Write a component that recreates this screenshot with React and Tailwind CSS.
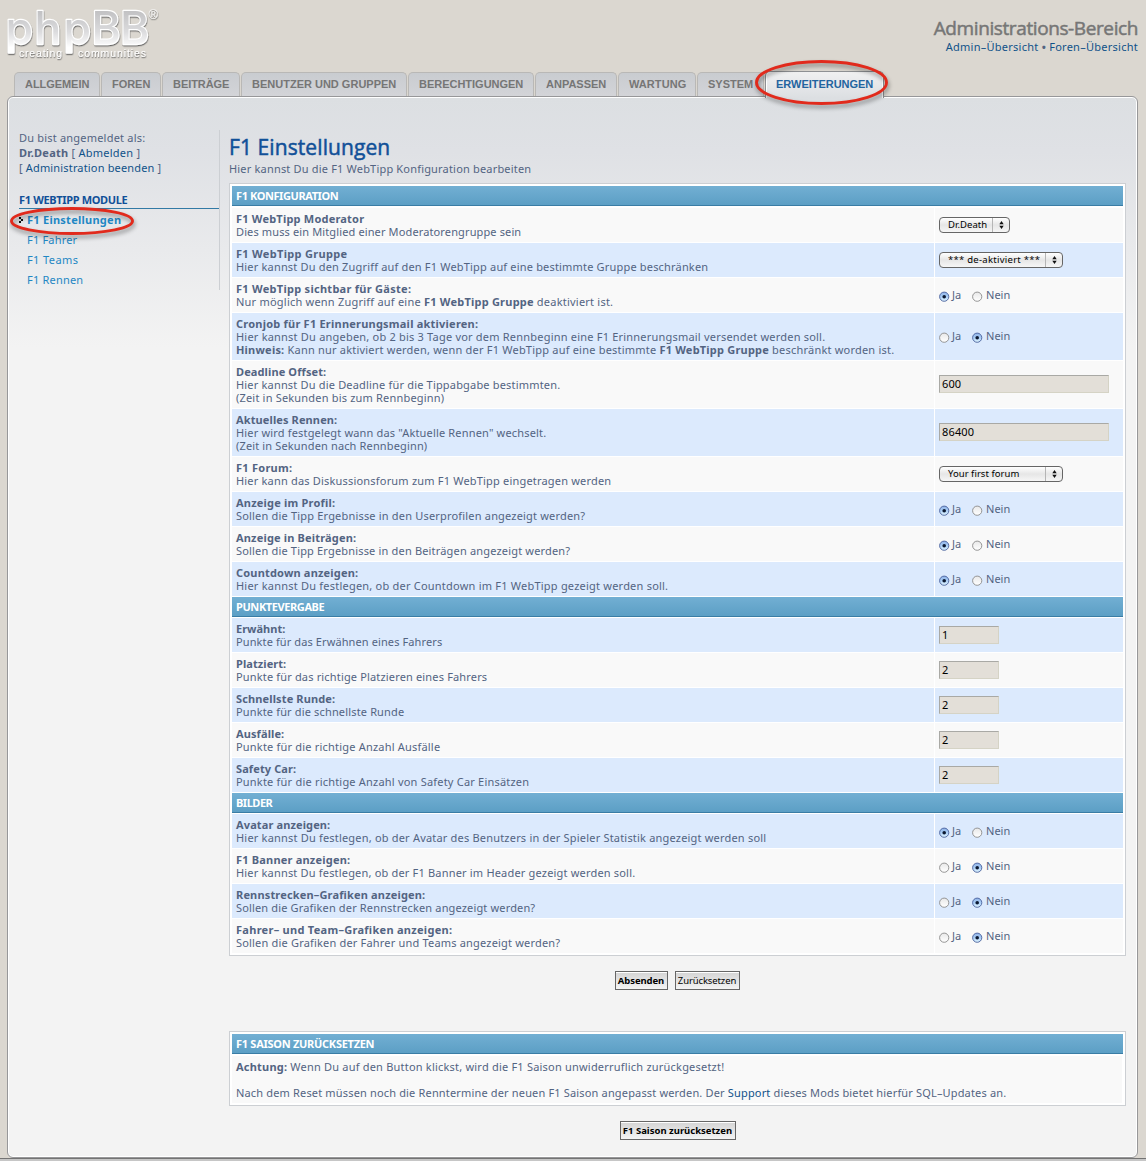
import React, { useLayoutEffect, useRef } from 'react';

// Spreads its text evenly over a fixed advance width.
function Fit({ w, className = '', children }) {
  const ref = useRef(null);
  useLayoutEffect(() => {
    const el = ref.current;
    el.style.letterSpacing = '0px';
    const natural = el.getBoundingClientRect().width;
    const count = el.textContent.length;
    el.style.letterSpacing = `${(w - 0.7 - natural) / count}px`;
  }, [w]);
  return (
    <span ref={ref} className={`inline-block whitespace-pre ${className}`}>
      {children}
    </span>
  );
}

const tabs = [
  ['ALLGEMEIN', 'w-[86px]', 65],
  ['FOREN', 'w-[60px]', 39],
  ['BEITRÄGE', 'w-[78px]', 57],
  ['BENUTZER UND GRUPPEN', 'w-[166px]', 145],
  ['BERECHTIGUNGEN', 'w-[126px]', 105],
  ['ANPASSEN', 'w-[82px]', 61],
  ['WARTUNG', 'w-[78px]', 58],
  ['SYSTEM', 'w-[67px]', 46],
];

const config = [
  { title: ['F1 WebTipp Moderator', 129], lines: [['Dies muss ein Mitglied einer Moderatorengruppe sein', 286]], field: 'select', value: 'Dr.Death', tw: 40, width: 'w-[71px]' },
  { title: ['F1 WebTipp Gruppe', 112], lines: [['Hier kannst Du den Zugriff auf den F1 WebTipp auf eine bestimmte Gruppe beschränken', 473]], field: 'select', value: '*** de-aktiviert ***', tw: 93, width: 'w-[124px]' },
  { title: ['F1 WebTipp sichtbar für Gäste:', 176], lines: [[<>Nur möglich wenn Zugriff auf eine <b>F1 WebTipp Gruppe</b> deaktiviert ist.</>, 378]], field: 'radio', yes: true },
  {
    title: ['Cronjob für F1 Erinnerungsmail aktivieren:', 243],
    lines: [
      ['Hier kannst Du angeben, ob 2 bis 3 Tage vor dem Rennbeginn eine F1 Erinnerungsmail versendet werden soll.', 590],
      [<><b>Hinweis:</b> Kann nur aktiviert werden, wenn der F1 WebTipp auf eine bestimmte <b>F1 WebTipp Gruppe</b> beschränkt worden ist.</>, 659],
    ],
    field: 'radio',
  },
  { title: ['Deadline Offset:', 91], lines: [['Hier kannst Du die Deadline für die Tippabgabe bestimmten.', 325], ['(Zeit in Sekunden bis zum Rennbeginn)', 209]], field: 'input', value: '600', tw: 20, width: 'w-[170px]' },
  { title: ['Aktuelles Rennen:', 102], lines: [['Hier wird festgelegt wann das "Aktuelle Rennen" wechselt.', 311], ['(Zeit in Sekunden nach Rennbeginn)', 192]], field: 'input', value: '86400', tw: 33, width: 'w-[170px]' },
  { title: ['F1 Forum:', 57], lines: [['Hier kann das Diskussionsforum zum F1 WebTipp eingetragen werden', 376]], field: 'select', value: 'Your first forum', tw: 72, width: 'w-[124px]' },
  { title: ['Anzeige im Profil:', 100], lines: [['Sollen die Tipp Ergebnisse in den Userprofilen angezeigt werden?', 350]], field: 'radio', yes: true },
  { title: ['Anzeige in Beiträgen:', 121], lines: [['Sollen die Tipp Ergebnisse in den Beiträgen angezeigt werden?', 335]], field: 'radio', yes: true },
  { title: ['Countdown anzeigen:', 123], lines: [['Hier kannst Du festlegen, ob der Countdown im F1 WebTipp gezeigt werden soll.', 433]], field: 'radio', yes: true },
];

const points = [
  { title: ['Erwähnt:', 50], lines: [['Punkte für das Erwähnen eines Fahrers', 207]], value: '1' },
  { title: ['Platziert:', 51], lines: [['Punkte für das richtige Platzieren eines Fahrers', 252]], value: '2' },
  { title: ['Schnellste Runde:', 100], lines: [['Punkte für die schnellste Runde', 169]], value: '2' },
  { title: ['Ausfälle:', 49], lines: [['Punkte für die richtige Anzahl Ausfälle', 205]], value: '2' },
  { title: ['Safety Car:', 61], lines: [['Punkte für die richtige Anzahl von Safety Car Einsätzen', 294]], value: '2' },
].map((r) => ({ ...r, field: 'input', tw: 6, width: 'w-[60px]' }));

const images = [
  { title: ['Avatar anzeigen:', 95], lines: [['Hier kannst Du festlegen, ob der Avatar des Benutzers in der Spieler Statistik angezeigt werden soll', 531]], field: 'radio', yes: true },
  { title: ['F1 Banner anzeigen:', 115], lines: [['Hier kannst Du festlegen, ob der F1 Banner im Header gezeigt werden soll.', 400]], field: 'radio' },
  { title: ['Rennstrecken–Grafiken anzeigen:', 190], lines: [['Sollen die Grafiken der Rennstrecken angezeigt werden?', 300]], field: 'radio' },
  { title: ['Fahrer– und Team–Grafiken anzeigen:', 217], lines: [['Sollen die Grafiken der Fahrer und Teams angezeigt werden?', 325]], field: 'radio' },
];

function Radio({ on }) {
  return (
    <svg width="11" height="11" viewBox="0 0 11 11" className="mt-[4px] block shrink-0">
      <defs>
        <linearGradient id="radioOn" x1="0" y1="0" x2="0" y2="1">
          <stop offset="0" stopColor="#8fb2e6" />
          <stop offset="0.5" stopColor="#a9cdf5" />
          <stop offset="1" stopColor="#e2f6ff" />
        </linearGradient>
        <linearGradient id="radioOff" x1="0" y1="0" x2="0" y2="1">
          <stop offset="0" stopColor="#e8e8e8" />
          <stop offset="1" stopColor="#ffffff" />
        </linearGradient>
      </defs>
      <circle cx="5.2" cy="5.7" r="4.6" fill={on ? 'url(#radioOn)' : 'url(#radioOff)'} stroke={on ? '#48609c' : '#8a8a8a'} strokeWidth="0.9" />
      {on && <circle cx="5.2" cy="5.8" r="1.8" fill="#0b1830" />}
    </svg>
  );
}

function Field({ row }) {
  if (row.field === 'select') {
    return (
      <div className={`${row.width} flex h-4 rounded-[4px] border border-[#666] bg-linear-to-b from-white via-[#e6e6e6] to-[#f6f6f6] text-[9.5px] leading-[14px] text-black`}>
        <div className="min-w-0 flex-1 pl-2">
          <Fit w={row.tw}>{row.value}</Fit>
        </div>
        <div className="flex w-[17px] items-center justify-center border-l border-[#b5b5b5]">
          <svg width="5" height="8" viewBox="0 0 5 8">
            <path d="M2.5 0 4.7 3.2H.3zM2.5 8 .3 4.8h4.4z" fill="#111" />
          </svg>
        </div>
      </div>
    );
  }
  if (row.field === 'input') {
    return (
      <div className={`${row.width} mb-px h-[18px] border border-t-[#a9a9a5] border-l-[#a9a9a5] border-r-[#d5d3c5] border-b-[#d5d3c5] bg-[#e3dfd8] pl-[2px] text-[11px] leading-[16px] text-black`}>
        <Fit w={row.tw}>{row.value}</Fit>
      </div>
    );
  }
  return (
    <div className="mb-[2px] flex h-[15px] leading-[15px]">
      <Radio on={row.yes} />
      <div className="w-[22px] pl-[2px]"><Fit w={10}>Ja</Fit></div>
      <Radio on={!row.yes} />
      <div className="pl-[3px]"><Fit w={25}>Nein</Fit></div>
    </div>
  );
}

function Bar({ w, children }) {
  return (
    <div className="h-5 border-b border-[#3a7da5] bg-linear-to-b from-[#72afd3] to-[#5c9fc5] pl-1 text-[11px] leading-[20px] font-bold text-white">
      <Fit w={w}>{children}</Fit>
    </div>
  );
}

function Rows({ rows, blueFirst }) {
  return rows.map((row, i) => {
    const bg = (i % 2 === 0) === !!blueFirst ? 'bg-[#dceafd]' : 'bg-[#f9f9f9]';
    return (
      <div key={row.title[0]} className="mb-px flex gap-px">
        <div className={`${bg} w-[702px] p-1 leading-[13px]`}>
          <div className="h-[13px] font-bold"><Fit w={row.title[1]}>{row.title[0]}</Fit></div>
          {row.lines.map(([t, w], k) => (
            <div key={k} className="h-[13px]"><Fit w={w}>{t}</Fit></div>
          ))}
        </div>
        <div className={`${bg} flex flex-1 items-center pl-1`}>
          <Field row={row} />
        </div>
      </div>
    );
  });
}

function Button({ w, className, children }) {
  return (
    <button className={`${className} h-[19px] border border-[#666] bg-linear-to-b from-[#d4d4d4] to-[#f4f4f4] text-[9.5px] leading-[17px] text-black shadow-[inset_0_1px_0_#fff]`}>
      <Fit w={w}>{children}</Fit>
    </button>
  );
}

function Logo() {
  return (
    <svg width="170" height="66" viewBox="0 0 170 66" className="block">
      <defs>
        <linearGradient id="logoFill" gradientUnits="userSpaceOnUse" x1="0" y1="10" x2="0" y2="54">
          <stop offset="0" stopColor="#c0c0c2" />
          <stop offset="0.5" stopColor="#dcdcde" />
          <stop offset="0.85" stopColor="#ffffff" />
        </linearGradient>
        <filter id="logoShadow" x="-10%" y="-10%" width="120%" height="130%">
          <feDropShadow dx="0.4" dy="1.2" stdDeviation="0.7" floodColor="#555" floodOpacity="0.85" />
        </filter>
      </defs>
      <g filter="url(#logoShadow)">
        <text x="5.500 34.500 63.500 91.500 120" y="43.500" fontFamily="Inter, sans-serif" fontWeight="500" fontSize="44.500" fill="url(#logoFill)" stroke="#fff" strokeWidth="2.400" strokeLinejoin="round" paintOrder="stroke">phpBB</text>
        <text x="148.500" y="18.500" fontFamily="Liberation Sans, sans-serif" fontSize="13" fill="#f8f8f8">®</text>
      </g>
      <g filter="url(#logoShadow)" fontFamily="Liberation Sans, sans-serif" fontSize="10.500" fill="#fff">
        <text x="19" y="57" textLength="43">creating</text>
        <text x="78" y="57" textLength="68">communities</text>
      </g>
    </svg>
  );
}

function Ring({ className, w, h }) {
  return (
    <svg width={w + 8} height={h + 8} className={`pointer-events-none absolute z-10 drop-shadow-[1px_3px_2px_rgba(0,0,0,0.4)] ${className}`}>
      <ellipse cx={w / 2} cy={h / 2} rx={w / 2 - 1.5} ry={h / 2 - 1.5} fill="none" stroke="#e12a1c" strokeWidth="2.9" />
    </svg>
  );
}

export default function App() {
  return (
    <div className="flex h-[1161px] w-[1146px] flex-col overflow-hidden bg-[#dbd7d0] font-['Noto_Sans','Lucida_Grande',sans-serif] text-[11px] leading-[15px] text-[#536482]">
      <header className="flex h-[71px] shrink-0 justify-between pr-2">
        <Logo />
        <div className="flex flex-col items-end pt-[16px]">
          <h1 className="h-[23px] text-[19px] leading-[24px] text-[#767676] [-webkit-text-stroke:0.5px_#767676]">
            <Fit w={205} className="font-['Open_Sans']">Administrations-Bereich</Fit>
          </h1>
          <div className="text-[#105289]">
            <Fit w={193}>Admin–Übersicht <span className="font-bold text-[#536482]">•</span> Foren–Übersicht</Fit>
          </div>
        </div>
      </header>

      <nav className="relative z-10 -mb-px flex h-[26px] shrink-0 pl-[14px] font-['Liberation_Sans'] text-[11px] font-bold">
        {tabs.map(([label, width, w]) => (
          <div key={label} className={`${width} mt-px mr-px h-6 shrink-0 rounded-t-[5px] border border-b-0 border-[#b9b8b6] bg-linear-to-b from-[#c9ccd0] to-[#d3d4d8] pl-[10px] leading-[23px] text-[#767676]`}>
            <Fit w={w}>{label}</Fit>
          </div>
        ))}
        <div className="relative h-[27px] w-[119px] shrink-0 rounded-t-[5px] border border-b-0 border-[#8f9194] bg-linear-to-b from-[#f0f0f1] to-[#dcdfe2] pl-[10px] leading-[25px] text-[#23649f] shadow-[inset_1px_0_0_#fff,inset_-1px_0_0_#fff]">
          <Fit w={98}>ERWEITERUNGEN</Fit>
          <Ring className="-top-[12px] -left-[11px]" w={133} h={45} />
        </div>
      </nav>

      <div className="mx-[7px] mr-[8px] flex h-[1062px] shrink-0 rounded-[6px] border border-[#979799] bg-[#f3f3f3] bg-[linear-gradient(to_bottom,#dcdfe2_0px,#dfe1e5_55px,#f3f3f3_250px)] shadow-[inset_0_0_0_1px_#fff]">
        <aside className="mt-[33px] ml-[11px] h-[160px] w-[201px] shrink-0 border-r border-[#cccfd3] text-[#536482]">
          <div className="h-[15px]"><Fit w={127}>Du bist angemeldet als:</Fit></div>
          <div className="h-[15px]"><Fit w={122}><b>Dr.Death</b> [ <span className="text-[#105289]">Abmelden</span> ]</Fit></div>
          <div className="h-[15px]"><Fit w={143}>[ <span className="text-[#105289]">Administration beenden</span> ]</Fit></div>
          <div className="mt-[17px] h-[17px] border-b border-[#327aa5] leading-[16px] font-bold text-[#115098]"><Fit w={109}>F1 WEBTIPP MODULE</Fit></div>
          <ul className="mt-px leading-5 text-[#1f87c4]">
            <li className="relative flex h-5 items-center pl-2 font-bold">
              <svg width="5" height="6" className="absolute top-[7px] left-0"><path d="M0 0h2v2H0zM2 2h2v2H2zM0 4h2v2H0z" fill="#111" /></svg>
              <Fit w={95}>F1 Einstellungen</Fit>
              <Ring className="-top-[3px] -left-[9px]" w={124} h={28} />
            </li>
            <li className="h-5 pl-2"><Fit w={51}>F1 Fahrer</Fit></li>
            <li className="h-5 pl-2"><Fit w={52}>F1 Teams</Fit></li>
            <li className="h-5 pl-2"><Fit w={57}>F1 Rennen</Fit></li>
          </ul>
        </aside>

        <main className="ml-[9px] w-[897px] pt-[36px]">
          <h2 className="h-[28px] text-[21px] leading-[28px] text-[#115098] [-webkit-text-stroke:0.5px_#115098]">
            <Fit w={162} className="font-['Open_Sans']">F1 Einstellungen</Fit>
          </h2>
          <p className="h-[22px] leading-[15px]"><Fit w={303}>Hier kannst Du die F1 WebTipp Konfiguration bearbeiten</Fit></p>

          <section className="h-[773px] border border-[#cccfd3] bg-white p-[2px]">
            <Bar w={103}>F1 KONFIGURATION</Bar>
            <div className="h-[2px]" />
            <Rows rows={config} />
            <Bar w={89}>PUNKTEVERGABE</Bar>
            <div className="h-px" />
            <Rows rows={points} blueFirst />
            <Bar w={37}>BILDER</Bar>
            <div className="h-px" />
            <Rows rows={images} blueFirst />
          </section>

          <div className="mt-[15px] flex justify-center gap-[7px] pr-px">
            <Button w={47} className="w-[53px] font-bold">Absenden</Button>
            <Button w={59} className="w-[65px]">Zurücksetzen</Button>
          </div>

          <section className="mt-[41px] h-[75px] border border-[#cccfd3] bg-white p-[2px]">
            <Bar w={139}>F1 SAISON ZURÜCKSETZEN</Bar>
            <div className="mt-[2px] mr-px h-[47px] bg-[#f9f9f9] pt-[4px] pl-1 leading-[13px]">
              <div className="h-[26px]"><Fit w={489}><b>Achtung:</b> Wenn Du auf den Button klickst, wird die F1 Saison unwiderruflich zurückgesetzt!</Fit></div>
              <div><Fit w={771}>Nach dem Reset müssen noch die Renntermine der neuen F1 Saison angepasst werden. Der <span className="text-[#105289]">Support</span> dieses Mods bietet hierfür SQL–Updates an.</Fit></div>
            </div>
          </section>

          <div className="mt-[15px] flex justify-center">
            <Button w={110} className="w-[116px] font-bold">F1 Saison zurücksetzen</Button>
          </div>
        </main>
      </div>
      <footer className="h-[3px] shrink-0 border-t border-[#737373] bg-[#c6c6c6]" />
    </div>
  );
}
